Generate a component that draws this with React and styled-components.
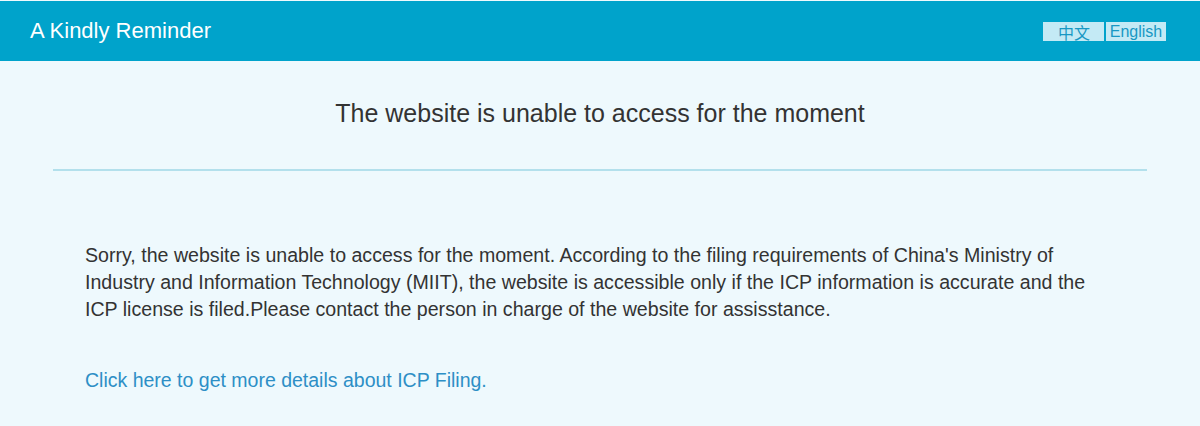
import React from 'react';
import styled, { createGlobalStyle } from 'styled-components';

const GlobalStyle = createGlobalStyle`
  html, body {
    margin: 0;
    padding: 0;
    background: #eef9fd;
    font-family: "Liberation Sans", Arial, Helvetica, sans-serif;
  }
`;

function App() {
    return (
        <>
            <GlobalStyle />
            <Page>
                <Header>
                    <Brand>A Kindly Reminder</Brand>
                    <LangSwitch>
                        <LangButton $wide>中文</LangButton>
                        <LangButton>English</LangButton>
                    </LangSwitch>
                </Header>
                <Main>
                    <Heading>The website is unable to access for the moment</Heading>
                    <Body>
                        <Message>
                            Sorry, the website is unable to access for the moment. According to the filing requirements of China's Ministry of Industry and Information Technology (MIIT), the website is accessible only if the ICP information is accurate and the ICP license is filed.Please contact the person in charge of the website for assisstance.
                        </Message>
                        <MoreLink href="#">Click here to get more details about ICP Filing.</MoreLink>
                    </Body>
                </Main>
            </Page>
        </>
    );
}

export default App;

const Page = styled.div`
  min-height: 426px;
  background: #eef9fd;
  padding-top: 1px;
`;

const Header = styled.header`
  height: 60px;
  background: #00a3cb;
  display: flex;
  align-items: center;
  justify-content: space-between;
  padding: 0 34px 0 30px;
`;

const Brand = styled.h1`
  margin: 0;
  font-size: 22px;
  line-height: 26px;
  font-weight: normal;
  color: #fff;
`;

const LangSwitch = styled.div`
  display: flex;
  gap: 2px;
  margin-top: 1px;
`;

const LangButton = styled.span`
  display: flex;
  align-items: center;
  justify-content: ${p => (p.$wide ? 'flex-end' : 'center')};
  height: 19px;
  width: ${p => (p.$wide ? '61px' : '60px')};
  padding-right: ${p => (p.$wide ? '14px' : '0')};
  box-sizing: border-box;
  background: #c4eaf5;
  color: #1898c4;
  font-size: 16px;
  font-family: "Liberation Sans", "Noto Sans CJK SC", sans-serif;
  cursor: pointer;
`;

const Main = styled.main`
  margin: 0 53px;
`;

const Heading = styled.h2`
  margin: 0;
  padding: 37px 0 41px;
  text-align: center;
  font-size: 25px;
  line-height: 30px;
  font-weight: normal;
  color: #333;
  border-bottom: 2px solid #b3e0ec;
`;

const Body = styled.section`
  padding: 71px 32px 0;
`;

const Message = styled.p`
  margin: 0;
  font-size: 19.6px;
  line-height: 27px;
  color: #333;
`;

const MoreLink = styled.a`
  display: inline-block;
  margin-top: 46px;
  font-size: 19.5px;
  line-height: 22px;
  color: #2d8fc6;
  text-decoration: none;
`;
